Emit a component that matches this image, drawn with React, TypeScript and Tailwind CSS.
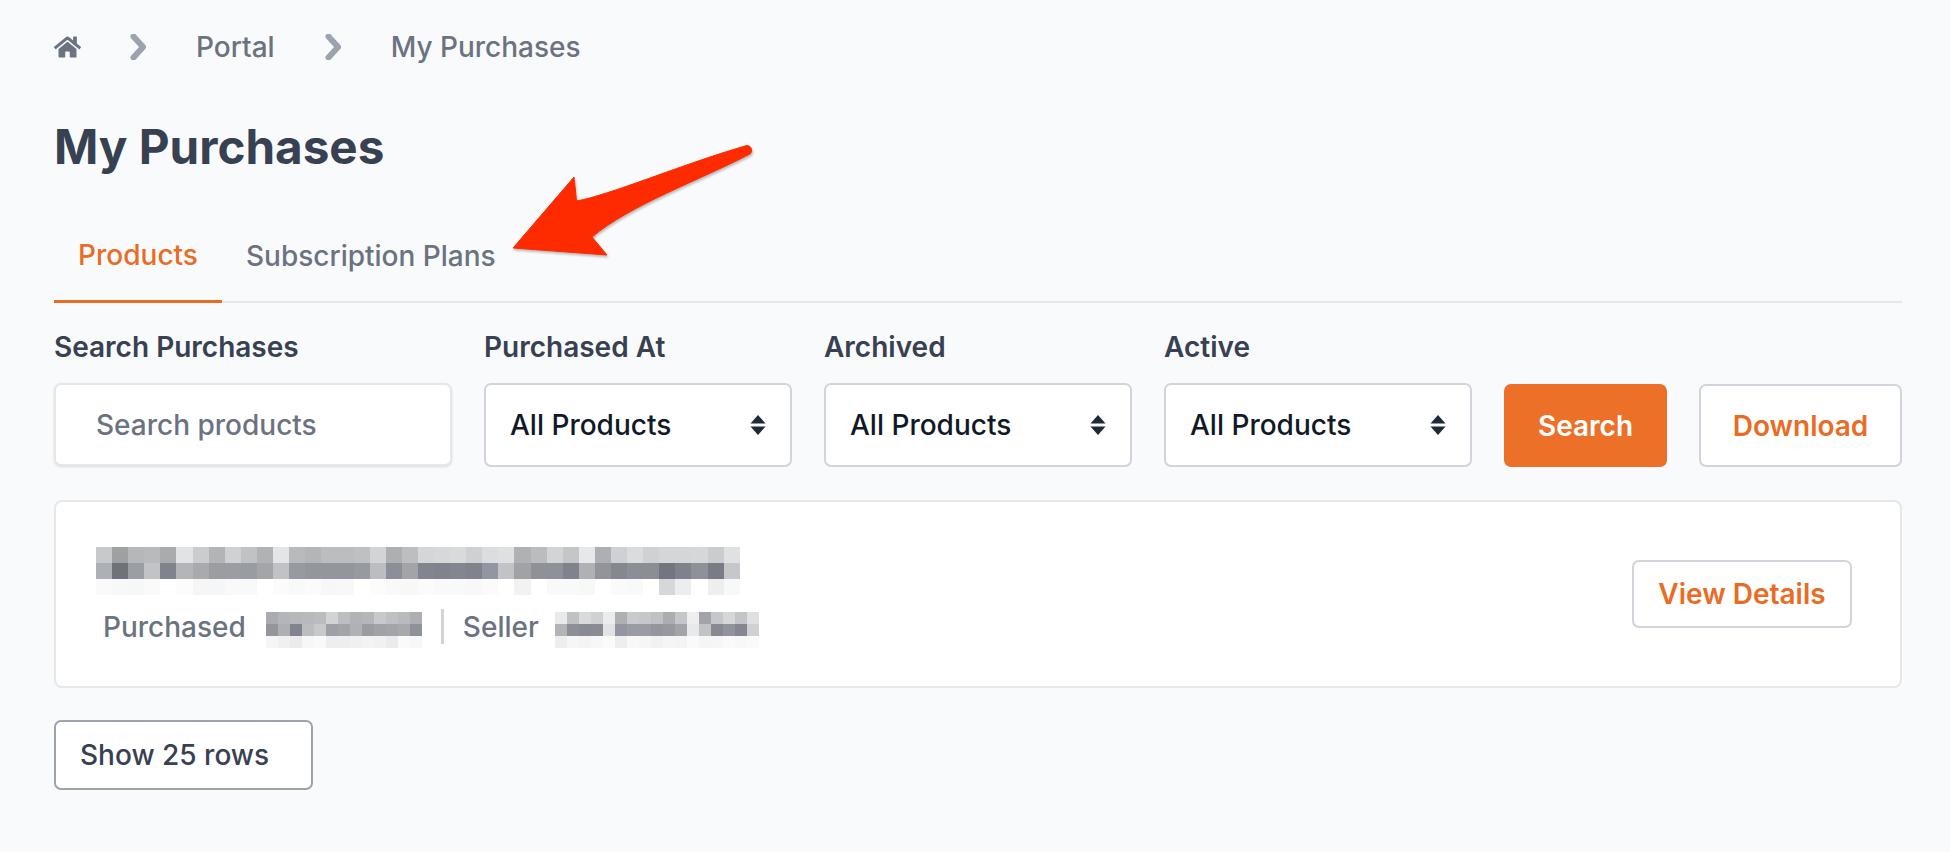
import { FaHome } from "react-icons/fa";

const titleRows = [
  "c8c9cc 9fa0a4 b5b7bb b9babd a9abae e2e3e5 cbccd0 b3b4b7 d0d1d4 c0c2c5 b1b2b5 e4e5e6 b9babd b4b5b8 bcbdc1 bcbdc1 bfc0c3 d3d4d7 adafb3 bcbec1 d5d6d9 d7d8da d9dadc ced0d3 dcdde0 dfe0e2 b0b1b5 bbbcbf d3d4d6 c5c6c9 e7e8e9 aeafb4 cfd0d3 dbdcde d0d1d4 d5d6d9 d5d6d9 d6d7da cbccd0 e0e1e3",
  "adb0b4 6f7279 9b9ea3 c2c3c6 7f838c b3b5b8 a8aaae 9b9da3 9b9da3 999ca2 a4a5a8 c1c2c5 989aa1 94969e 94969e 94969e 979aa0 bcbdc1 8c8f98 a2a4a8 82858d 80838c 83868e 80838c 9296a0 c2c3c7 a0a2a6 8f9199 8f9199 80838c b0b1b4 92949c 86888f 8c8e95 8c8e95 737680 7f828b 8f9198 797c86 c6c7ca",
  "fafafa f7f8f8 f6f7f7 fafafa ffffff fcfcfc f6f6f7 f5f6f7 f9f9fa f8f9f9 ffffff fbfbfb f8f9f9 fbfbfb f7f7f8 f8f8f9 ffffff fcfcfc f9f9fa f8f8f9 fbfbfc f9f9fa f8f9f9 f8f8f9 fbfbfc ffffff f2f2f3 ffffff f9f9fa f8f9f9 f7f8f8 ffffff fafafa f8f9f9 ffffff d6d7d9 ecedee ffffff eeeeef f7f8f8",
];

const dateRows = [
  "a9abb0 b4b5b9 b6b7ba b8b9bc bbbcbf d2d3d5 bdbec2 b2b3b7 b5b6ba c8c9cc bfc0c3 b9babd adafb3",
  "94969c adafb2 81848c bcbdc0 c8c9cb 9ea0a6 a2a4a8 b0b1b4 999ca2 a0a2a7 a3a5a9 a8a9ad 8f9198",
  "f5f5f6 f0f0f1 ebebed f7f7f8 f9f9fa edeef0 edeef0 eff0f1 f3f3f4 f0f1f2 eaebec fafafa f7f7f8",
];

const sellerRows = [
  "e9eaeb c0c1c4 d9dadc d0d1d3 ebecee aeb0b4 c9cacd c6c7ca c0c1c4 abadb1 c5c6c9 eeeeef a2a4aa c6c7ca d6d7d9 c4c5c8 dfe0e2",
  "b3b4b8 8d8f96 898b92 8a8c93 e2e3e5 9395a0 9a9ca3 9a9ca3 94969c 9699a0 a2a4aa e8e9ea c2c3c6 888a92 92949b 858790 d0d1d3",
  "eeeeef f6f6f7 f4f4f5 f7f7f8 fbfbfb eeeef0 f8f8f9 f6f6f7 f1f1f2 f5f5f6 f4f4f5 fafafa f5f5f6 f6f6f7 fafafa f8f8f9 fafafa",
];

function Pixels({ rows, size }: { rows: string[]; size: number }) {
  return (
    <div className="flex flex-col">
      {rows.map((row, i) => (
        <div key={i} className="flex">
          {row.split(" ").map((color, j) => (
            <div key={j} style={{ width: size, height: size, backgroundColor: `#${color}` }} />
          ))}
        </div>
      ))}
    </div>
  );
}

function Chevron() {
  return (
    <svg width="17" height="26" viewBox="0 0 17 26" fill="none">
      <path d="M3.5 2.5l9.5 10.5-9.5 10.5" stroke="#9ca3af" strokeWidth="6" strokeLinejoin="round" strokeLinecap="round" />
    </svg>
  );
}

function SelectBox({ label }: { label: string }) {
  return (
    <div className="ml-[32px] flex w-[308px] flex-col">
      <label className="flex h-[32px] items-center text-[28px] font-semibold text-[#374151]">{label}</label>
      <div className="mt-[20px] flex h-[84px] items-center justify-between rounded-[7px] border-2 border-[#d1d5db] bg-white pl-[24px] pr-[24px]">
        <span className="text-[28px] font-medium text-[#111827]">All Products</span>
        <svg width="16" height="20" viewBox="0 0 16 20">
          <path d="M8 0l7.5 8.5H.5zM.5 11.5h15L8 20z" fill="#1f2937" />
        </svg>
      </div>
    </div>
  );
}

export default function App() {
  return (
    <div className="relative min-h-[852px] bg-[#f9fafb] pl-[54px] pr-[48px] pt-[30px] font-['Inter',sans-serif]">
      <nav className="flex h-[34px] items-center text-[28px] font-medium text-[#6b7280]">
        <FaHome className="h-[24px] w-[27px] text-[#6b7280]" />
        <span className="ml-[49px]"><Chevron /></span>
        <span className="ml-[49px]">Portal</span>
        <span className="ml-[50px]"><Chevron /></span>
        <span className="ml-[49px]">My Purchases</span>
      </nav>

      <h1 className="mt-[53px] h-[60px] text-[47.6px] font-bold leading-[60px] text-[#374151]">My Purchases</h1>

      <div className="mt-[46px] flex h-[80px] border-b-2 border-[#e5e7eb] text-[28px] font-medium">
        <div className="-mb-[2px] flex w-[168px] items-center justify-center border-b-[3px] border-[#ea6c24] pb-[13px] text-[#ea6c24]">Products</div>
        <div className="ml-[24px] flex items-center pb-[13px] text-[#6b7280]">Subscription Plans</div>
      </div>

      <div className="mt-[28px] flex items-start">
        <div className="flex w-[398px] flex-col">
          <label className="flex h-[32px] items-center text-[28px] font-semibold text-[#374151]">Search Purchases</label>
          <div className="mt-[20px] flex h-[83px] items-center rounded-[7px] border-2 border-[#e5e7eb] bg-white pl-[40px] text-[28px] font-medium text-[#6b7280] shadow-sm">
            Search products
          </div>
        </div>
        <SelectBox label="Purchased At" />
        <SelectBox label="Archived" />
        <SelectBox label="Active" />
        <button className="ml-[32px] mt-[53px] h-[83px] w-[163px] rounded-[7px] bg-[#ec7028] text-[28px] font-semibold text-white">Search</button>
        <button className="ml-[32px] mt-[53px] h-[83px] flex-1 rounded-[7px] border-2 border-[#d1d5db] bg-white text-[28px] font-semibold text-[#ea6c24]">Download</button>
      </div>

      <div className="mt-[33px] flex h-[188px] items-center justify-between rounded-[8px] border-2 border-[#e5e7eb] bg-white pl-[40px] pr-[48px]">
        <div className="self-start pt-[45px]">
          <Pixels rows={titleRows} size={16.1} />
          <div className="mt-[17px] flex h-[36px] items-center pl-[7px] text-[28px] font-medium text-[#6b7280]">
            <span className="mb-[7px]">Purchased</span>
            <span className="ml-[20px] self-start"><Pixels rows={dateRows} size={12} /></span>
            <span className="mb-[7px] ml-[19px] h-[35px] w-[3px] bg-[#d1d5db]" />
            <span className="mb-[7px] ml-[19px]">Seller</span>
            <span className="ml-[16px] self-start"><Pixels rows={sellerRows} size={12} /></span>
          </div>
        </div>
        <button className="h-[68px] w-[220px] rounded-[7px] border-2 border-[#d1d5db] bg-white text-[28px] font-semibold text-[#ea6c24]">View Details</button>
      </div>

      <button className="mt-[32px] flex h-[70px] w-[259px] items-center rounded-[7px] border-2 border-[#9ca3af] bg-white pl-[24px] text-[28px] font-medium text-[#374151]">Show 25 rows</button>

      {/* red annotation arrow drawn over the page */}
      <svg className="absolute left-[500px] top-[135px] drop-shadow-[1px_2px_1px_rgba(0,0,0,0.25)]" width="265" height="130" viewBox="500 135 265 130">
        <path
          d="M513 248L574 177L576.5 201C610 195 680 165 745 146C750 144 754 150 750 154C700 180 630 205 592 237L607 255Z"
          fill="#fe2a00"
          stroke="#fe2a00"
          strokeLinejoin="round"
        />
      </svg>
    </div>
  );
}
